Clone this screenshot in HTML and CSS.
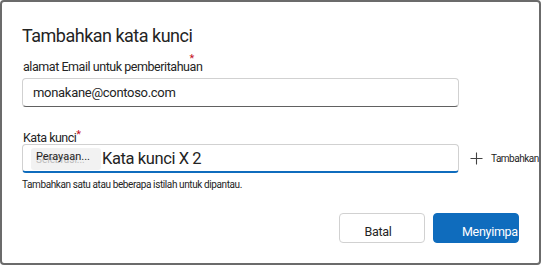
FILE: index.html
```html
<!DOCTYPE html>
<html lang="id">
<head>
<meta charset="utf-8">
<link rel="stylesheet" href="styles.css">
</head>
<body>
<div class="dialog">
  <h1 class="title">Tambahkan kata kunci</h1>
  <div class="field">
    <label class="label">alamat Email untuk pemberitahu<span class="req-wrap">a<span class="req">*</span></span>n</label>
    <div class="input email">monakane@contoso.com</div>
  </div>
  <div class="field kw-field">
    <label class="label">Kata kunci<span class="req">*</span></label>
    <div class="kw-row">
      <div class="input keywords">
        <span class="chip"><span class="chip-ghost">Selebrasi...</span><span class="chip-text">Perayaan...</span></span>
        <span class="kw-text">Kata kunci X 2</span>
      </div>
      <div class="add">
        <svg class="plus" width="13" height="13" viewBox="0 0 13 13"><path d="M6.5 0.5v12M0.5 6.5h12" stroke="#424242" stroke-width="1.1" fill="none"/></svg>
        <span class="add-text">Tambahkan</span>
      </div>
    </div>
    <div class="hint">Tambahkan satu atau beberapa istilah untuk dipantau.</div>
  </div>
  <div class="actions">
    <button class="btn secondary">Batal</button>
    <button class="btn primary">Menyimpan</button>
  </div>
</div>
</body>
</html>
```
FILE: styles.css
```css
* { box-sizing: border-box; }
html, body { margin: 0; padding: 0; background: #fff; }
body { font-family: Roboto, "Liberation Sans", sans-serif; color: #242424; }
.dialog {
  width: 541px;
  height: 265px;
  border: 2px solid #6b6b6b;
  border-radius: 4px;
  padding: 22px 0 0 20px;
  display: flex;
  flex-direction: column;
  overflow: hidden;
}
.title {
  margin: 0;
  font-size: 18px;
  font-weight: 400;
  line-height: 24px;
  letter-spacing: -0.5px;
}
.field { display: flex; flex-direction: column; }
.label {
  font-size: 12.5px;
  line-height: 16px;
  letter-spacing: -0.45px;
  margin: 11px 0 0 1px;
}
.req { color: #c50f1f; font-size: 11px; vertical-align: 4px; letter-spacing: 0; }
.req-wrap { position: relative; }
.req-wrap .req { position: absolute; left: 0; top: -8px; }
.input {
  width: 437px;
  height: 29px;
  flex: none;
  border: 1px solid #d1d1d1;
  border-bottom-color: #616161;
  border-radius: 4px;
  display: flex;
  align-items: center;
  padding-left: 10px;
  font-size: 13px;
  letter-spacing: -0.3px;
  margin-top: 3px;
}
.kw-field { margin-top: 21px; }
.kw-field .label { margin-top: 0; line-height: 13px; letter-spacing: -0.5px; }
.kw-row { display: flex; align-items: center; margin-top: 0; }
.keywords {
  margin-top: 0;
  border-bottom: 2px solid #0f6cbd;
  padding-left: 8px;
  letter-spacing: 0;
}
.chip {
  position: relative;
  background: #f2f2f2;
  height: 22px;
  width: 70px;
  flex: none;
  border-radius: 3px;
  display: flex;
  align-items: center;
  padding-left: 5px;
  font-size: 11px;
  margin-top: 2px;
}
.chip-text { position: relative; top: -3px; }
.chip-ghost { position: absolute; left: 5px; top: 6px; color: #9a9a9a; font-size: 10px; opacity: 0.6; }
.kw-text { font-size: 16.5px; margin-left: 1px; letter-spacing: -0.4px; }
.add { display: flex; align-items: center; margin-left: 11px; white-space: nowrap; }
.plus { margin-right: 8px; flex: none; }
.add-text { font-size: 10px; letter-spacing: -0.5px; }
.hint { font-size: 10px; margin-top: 6px; letter-spacing: -0.4px; }
.actions {
  display: flex;
  gap: 8px;
  margin-top: 23px;
  margin-left: 317px;
}
.btn {
  font-family: inherit;
  height: 30px;
  width: 86px;
  border-radius: 4px;
  font-size: 12.5px;
  letter-spacing: -0.3px;
  overflow: hidden;
  white-space: nowrap;
  padding: 6px 0 0 0;
}
.secondary { background: #fff; border: 1px solid #d1d1d1; color: #242424; padding-right: 8px; }
.primary { background: #0f6cbd; border: 1px solid #0f6cbd; color: #fff; text-align: left; padding-left: 28px; }
```
